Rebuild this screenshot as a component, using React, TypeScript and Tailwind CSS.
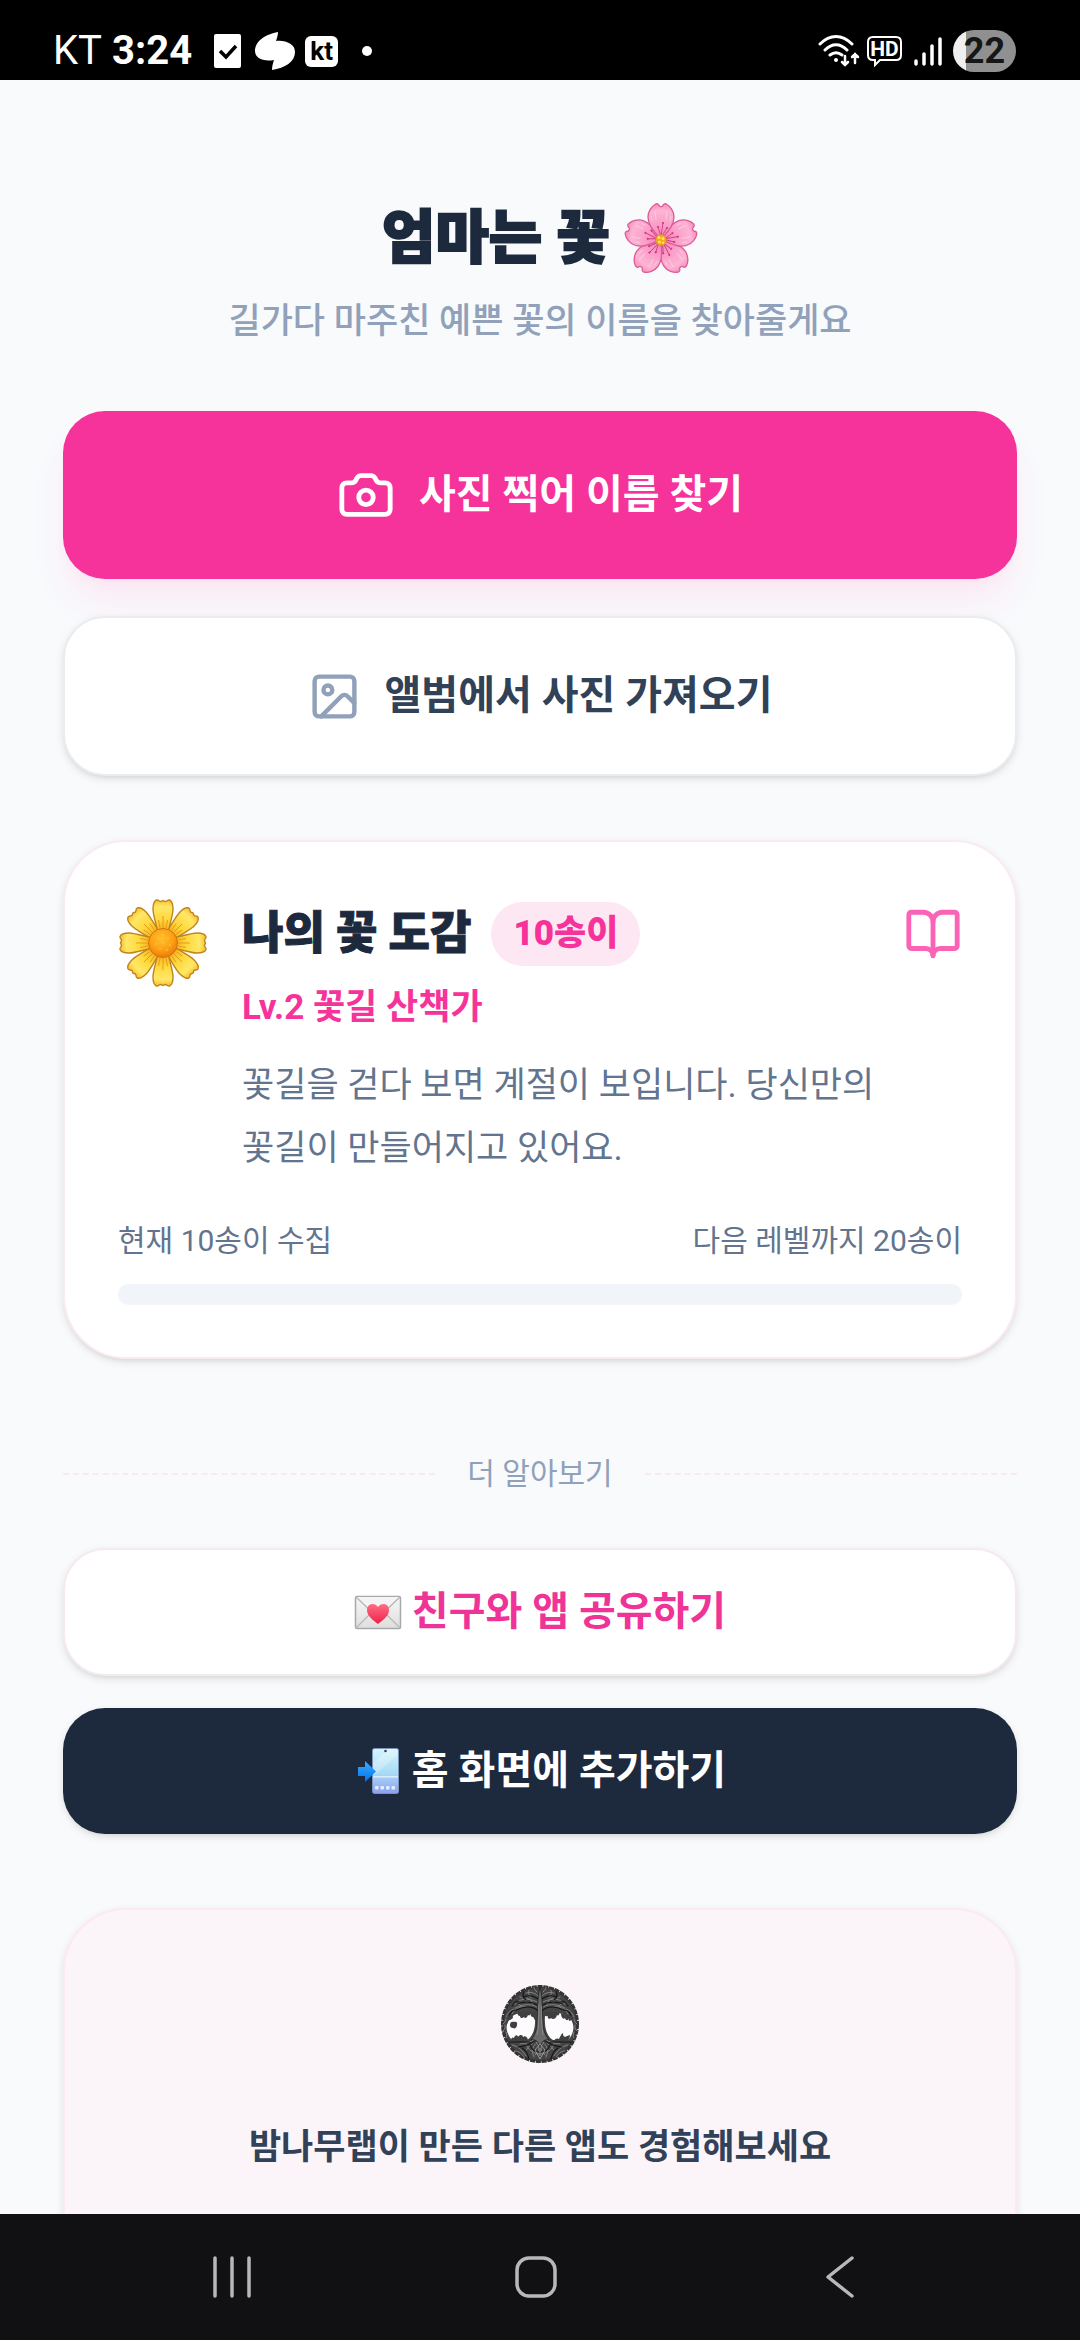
import type { ReactNode } from 'react';
import { BookOpen, Camera, Image as ImageIcon } from 'lucide-react';

function CherryBlossom() {
  return (
    <svg viewBox="-37 -38 74 72" className="h-[72px] w-[74px]" role="img" aria-label="벚꽃">
      <defs>
        <radialGradient id="blossom" gradientUnits="userSpaceOnUse" cx="0" cy="0" r="37">
          <stop offset="0" stopColor="#f47fb4" />
          <stop offset="0.45" stopColor="#fb9fc9" />
          <stop offset="0.8" stopColor="#fdb4d5" />
          <stop offset="1" stopColor="#f68abb" />
        </radialGradient>
      </defs>
      {[144, 216, 72, 288, 0].map((a) => (
        <g key={a} transform={`rotate(${a})`}>
          <path
            d="M0 0C-4 -6 -13 -13 -13 -23C-13 -29 -9 -34 -6 -35.500C-4 -37 -2.500 -36 -2 -34.500C-1.500 -33 1.500 -33 2 -34.500C2.500 -36 4 -37 6 -35.500C9 -34 13 -29 13 -23C13 -13 4 -6 0 0Z"
            fill="url(#blossom)"
            stroke="#dc5c97"
            strokeWidth="1.3"
            strokeLinejoin="round"
          />
          <path d="M-5 -20L-6 -29M5 -20L6 -29M-9 -19L-10 -24M9 -19L10 -24" stroke="#fdd3e6" strokeWidth="1" opacity="0.8" />
        </g>
      ))}
      {[0, 72, 144, 216, 288].map((a) => (
        <g key={a} transform={`rotate(${a})`} stroke="#d03c80" strokeWidth="0.9" fill="#c22d70">
          <path d="M0 -4L2 -17M0 -4L-3 -13M1 -4L6 -12" />
          <circle cx="2" cy="-17" r="0.7" />
          <circle cx="-3" cy="-13" r="0.7" />
          <circle cx="6" cy="-12" r="0.7" />
        </g>
      ))}
      <circle r="5.500" fill="#f3a81f" stroke="#d9812a" strokeWidth="0.6" />
      <g fill="#ffe45c">
        <circle cx="-2" cy="-2.500" r="1.500" />
        <circle cx="2" cy="-1.500" r="1.500" />
        <circle cx="-1.500" cy="2" r="1.500" />
        <circle cx="2.200" cy="2.800" r="1.200" />
      </g>
    </svg>
  );
}

function YellowFlower() {
  return (
    <svg viewBox="-45 -45 90 90" className="h-[90px] w-[90px] shrink-0" role="img" aria-label="꽃">
      <defs>
        <radialGradient id="petal" gradientUnits="userSpaceOnUse" cx="0" cy="0" r="43">
          <stop offset="0.3" stopColor="#f9b01c" />
          <stop offset="0.55" stopColor="#ffd83a" />
          <stop offset="0.85" stopColor="#ffe868" />
          <stop offset="1" stopColor="#f7c12c" />
        </radialGradient>
        <radialGradient id="disc" cx="0.45" cy="0.35" r="0.65">
          <stop offset="0" stopColor="#ffc02e" />
          <stop offset="0.6" stopColor="#fda013" />
          <stop offset="1" stopColor="#ec7a0a" />
        </radialGradient>
      </defs>
      {[45, 135, 225, 315, 0, 90, 180, 270].map((a) => (
        <g key={a} transform={`rotate(${a})`}>
          <path
            d="M-5 -10C-7 -20 -10 -28 -10 -34C-10 -38 -9 -42 -6.500 -43C-4.500 -43.500 -4 -41.500 -2.500 -41.500C-1 -41.500 -1 -42.500 0 -42.500C1 -42.500 1 -41.500 2.500 -41.500C4 -41.500 4.500 -43.500 6.500 -43C9 -42 10 -38 10 -34C10 -28 7 -20 5 -10Z"
            fill="url(#petal)"
            stroke="#c08420"
            strokeWidth="1.4"
            strokeLinejoin="round"
          />
          <path d="M0 -15V-27M-3 -15L-4.500 -23M3 -15L4.500 -23" stroke="#df9720" strokeWidth="0.9" />
        </g>
      ))}
      <circle r="14.500" fill="url(#disc)" stroke="#cf7411" strokeWidth="1" />
      <g fill="#ffd15c" opacity="0.55">
        <circle cx="-5" cy="-5" r="1" />
        <circle cx="0" cy="-8" r="1" />
        <circle cx="5" cy="-5" r="1" />
        <circle cx="-7" cy="1" r="1" />
        <circle cx="0" cy="0" r="1" />
        <circle cx="7" cy="2" r="1" />
        <circle cx="-3" cy="6" r="1" />
        <circle cx="4" cy="7" r="1" />
      </g>
    </svg>
  );
}

function LoveLetter() {
  return (
    <svg viewBox="0 0 48 48" className="h-12 w-12" role="img" aria-label="편지">
      <defs>
        <linearGradient id="paper" x1="0" y1="0" x2="0" y2="1">
          <stop offset="0" stopColor="#f7f7f7" />
          <stop offset="1" stopColor="#dedede" />
        </linearGradient>
        <linearGradient id="heart" x1="0" y1="0" x2="0" y2="1">
          <stop offset="0" stopColor="#ff6f86" />
          <stop offset="1" stopColor="#ee2048" />
        </linearGradient>
      </defs>
      <rect x="1.500" y="8.500" width="45" height="32" rx="1.500" fill="url(#paper)" stroke="#a9a9a9" strokeWidth="1.500" />
      <path d="M2 40L19 23M46 40L29 23" stroke="#b9b9b9" strokeWidth="1.200" />
      <path d="M2 9L21 27C23 29 25 29 27 27L46 9" fill="#f4f4f4" stroke="#b4b4b4" strokeWidth="1.200" />
      <path d="M24 36C19 32 13 28 13 22C13 15 21 14 24 19C27 14 35 15 35 22C35 28 29 32 24 36Z" fill="url(#heart)" />
    </svg>
  );
}

function PhoneArrow() {
  return (
    <svg viewBox="0 0 48 48" className="h-12 w-12" role="img" aria-label="휴대폰">
      <defs>
        <linearGradient id="phone" x1="0" y1="0" x2="0" y2="1">
          <stop offset="0" stopColor="#d5f4fb" />
          <stop offset="0.55" stopColor="#a9dbf6" />
          <stop offset="1" stopColor="#8f9df0" />
        </linearGradient>
        <linearGradient id="arrow" x1="0" y1="0" x2="0" y2="1">
          <stop offset="0" stopColor="#38adff" />
          <stop offset="1" stopColor="#0072f0" />
        </linearGradient>
      </defs>
      <rect x="18.500" y="1.500" width="26" height="45" rx="2" fill="url(#phone)" stroke="#7d93b8" strokeWidth="1" />
      <path d="M19 16L34 2H43.500V8L19 29Z" fill="#ffffff" opacity="0.25" />
      <rect x="19" y="29" width="25" height="1.500" fill="#d9edff" />
      <circle cx="31.500" cy="4" r="1.300" fill="#33415c" />
      <g fill="#dff0ff">
        <rect x="21" y="39" width="3.500" height="3.500" rx="1" />
        <rect x="26.500" y="39" width="3.500" height="3.500" rx="1" />
        <rect x="32" y="39" width="3.500" height="3.500" rx="1" />
        <rect x="37.500" y="39" width="3.500" height="3.500" rx="1" />
      </g>
      <path d="M4 20H11V14L22 24.500L11 35V29H4Z" fill="url(#arrow)" />
    </svg>
  );
}

function HalfTree() {
  return (
    <g>
      <path
        d="M35 32C31 29 27 30 24 29C18 29 12 31 9 35C7 39 6 43 7 47C8 51 10 54 12 56H27C32 53 36 46 35 32Z"
        fill="#fdfbfd"
      />
      <g fill="none" stroke="#8b8b8b" strokeWidth="0.9" strokeLinecap="round">
        <path d="M38 24C34 20 25 19 15 24M37 18C31 15 25 14 18 17M38 12C34 8 30 8 26 9M12 30C14 25 20 22 26 23M6 33C8 28 11 26 14 25" />
        <path d="M27 18C25 15 22 13 20 13M31 14C29 12 28 9 29 6M22 22C19 20 16 19 13 20M33 20C32 17 30 15 27 14M37 8C35 6 34 5 34 3" />
        <path d="M3 40C5 38 6 37 6 35M3 47C5 45 6 43 5 41M6 54C7 52 7 50 6 48" />
        <path d="M38 53C36 58 30 60 26 66M37 55C33 56 27 60 20 60M38 58C32 62 31 67 34 73M36 58C40 62 40 68 35 71M26 60C28 66 33 69 39 70M12 61C18 62 22 66 26 72M15 67C19 67 22 70 24 73" />
      </g>
      <g fill="none" stroke="#141414" strokeWidth="1.1" strokeLinecap="round">
        <path d="M38 27C33 22 25 22 16 26M37 21C31 17 25 17 17 20M38 15C33 11 28 11 23 13M9 32C10 28 13 26 17 26M24 8C22 11 23 14 26 16M12 22C14 18 17 17 19 17" />
        <path d="M37 56C31 59 26 63 18 63M9 58H30M30 61C32 66 36 68 39 68M22 64C25 66 28 70 29 75" />
      </g>
    </g>
  );
}

function TreeLogo() {
  return (
    <svg viewBox="0 0 80 80" className="h-[80px] w-[80px]" role="img" aria-label="밤나무랩">
      <circle cx="40" cy="40" r="37.500" fill="#444444" stroke="#333333" strokeWidth="3" strokeDasharray="5 0.800" />
      <HalfTree />
      <g transform="translate(80 0) scale(-1 1)">
        <HalfTree />
      </g>
      <path
        d="M40 3C37 15 38 25 37 38C37 46 35 51 31 56C36 55 38 58 40 62C42 58 44 55 49 56C45 51 43 46 43 38C42 25 43 15 40 3Z"
        fill="#6a6a6a"
        stroke="#1f1f1f"
        strokeWidth="0.8"
      />
      <path d="M39 20C38.500 32 39 44 37 51M41.500 22C41 34 42 44 43 51" fill="none" stroke="#969696" strokeWidth="0.7" />
      <g fill="#3f3f3f">
        <path d="M10 41C10 38 12 37 14 38C16 37 18 39 17 41C17 44 14 45 13 44C11 44 10 43 10 41Z" />
        <path d="M18 28H31C31 31 29 32 28 31C27 34 25 35 24 33C22 35 20 34 20 32C18 32 17 30 18 28Z" />
        <path d="M31 29L36 28V37C34 36 34 33 33 33C31 33 30 31 31 29Z" />
        <path d="M44 28H59C60 31 58 32 57 31C56 35 53 36 51 34C49 36 47 34 48 32C46 33 44 32 44 28Z" />
        <path d="M61 29L71 32C72 35 70 36 69 34C68 37 66 37 65 34C63 36 61 33 61 29Z" />
        <path d="M11 57C11 53 13 53 14 54C15 50 18 51 18 53C20 50 23 51 23 53C26 51 28 54 28 57Z" />
        <path d="M54 57C55 54 58 54 59 55C60 53 61 50 63 49C63 51 63 52 65 53C67 52 69 51 70 51C70 54 68 57 67 57Z" />
        <path d="M6 42L9 36C10 37 11 35 13 34C12 32 14 31 15 29L8 32ZM74 42L72 36L69 37L68 32L73 33Z" />
      </g>
      <path d="M40 60L45 66L40 75L35 66ZM40 64V72" fill="none" stroke="#9a9a9a" strokeWidth="1" />
    </svg>
  );
}

function StatusBar() {
  return (
    <header className="flex h-20 shrink-0 items-end justify-between bg-black pr-16 pb-2 pl-[53px] text-white">
      <div className="flex h-[42px] items-center">
        <span className="text-[40px] leading-[42px] font-normal">KT</span>
        <span className="ml-2.5 text-[40px] leading-[42px] font-bold">3:24</span>
        <svg viewBox="0 0 27 34" className="ml-[22px] h-[34px] w-[27px]" aria-hidden="true">
          <rect width="27" height="34" rx="2" fill="#fff" />
          <path d="M6 17L12 23L22 12" fill="none" stroke="#000" strokeWidth="3.500" />
        </svg>
        <svg viewBox="0 0 40 38" className="ml-3.5 h-[38px] w-10" aria-hidden="true">
          <path
            d="M23 0C23 3 22 6 21 9C31 8 40 12 40 20C40 30 30 36 17 38C17 34 18 31 19 28C8 30 0 26 0 19C0 9 11 2 23 0Z"
            fill="#fff"
          />
        </svg>
        <span className="ml-2.5 flex h-[31px] w-[33px] items-center justify-center rounded-md bg-white text-[26px] leading-[28px] font-bold text-black">
          kt
        </span>
        <span className="ml-6 h-2.5 w-2.5 rounded-full bg-white" />
      </div>
      <div className="flex h-[42px] items-center">
        <svg viewBox="0 0 42 32" className="h-8 w-[42px]" fill="none" stroke="#fff" strokeWidth="3" strokeLinecap="round" aria-hidden="true">
          <path d="M2 9C12 -1 24 -1 34 9M7 15C14 8 22 8 29 15M12 20C16 17 20 17 24 20" />
          <circle cx="18" cy="25" r="2" fill="#fff" stroke="none" />
          <path d="M27 21V30M24 27L27 30L30 27M37 28V19M34 22L37 19L40 22" strokeWidth="2.500" />
        </svg>
        <svg viewBox="0 0 37 32" className="ml-1.5 h-8 w-[37px]" aria-hidden="true">
          <path d="M7 2H30Q35 2 35 7V20Q35 25 30 25H14L9 30V25H7Q2 25 2 20V7Q2 2 7 2Z" fill="none" stroke="#fff" strokeWidth="2" />
          <text x="18.500" y="21" textAnchor="middle" fill="#fff" fontSize="21" fontWeight="700">
            HD
          </text>
        </svg>
        <svg viewBox="0 0 28 32" className="ml-[11px] h-8 w-7" stroke="#fff" strokeWidth="3.500" strokeLinecap="round" aria-hidden="true">
          <path d="M2 26V29M10 19V29M18 11V29M26 4V29" />
        </svg>
        <span className="ml-[11px] flex h-[42px] w-[63px] items-center justify-center rounded-full bg-linear-to-r from-[#efefef] from-21% to-[#909090] to-21% text-[36px] leading-[42px] font-bold text-[#161616]">
          22
        </span>
      </div>
    </header>
  );
}

function NavBar() {
  return (
    <nav className="grid h-[126px] shrink-0 grid-cols-3 items-center bg-[#111113] pr-[88px] pl-20 text-[#b8b8ba]">
      <button type="button" aria-label="최근 앱" className="justify-self-center">
        <svg viewBox="0 0 44 44" className="h-11 w-11" fill="none" stroke="currentColor" strokeWidth="3.500" strokeLinecap="round">
          <path d="M5 3V41M22 3V41M39 3V41" />
        </svg>
      </button>
      <button type="button" aria-label="홈" className="justify-self-center">
        <svg viewBox="0 0 44 44" className="h-11 w-11" fill="none" stroke="currentColor" strokeWidth="3.500">
          <rect x="3" y="3" width="38" height="38" rx="12" />
        </svg>
      </button>
      <button type="button" aria-label="뒤로" className="justify-self-center">
        <svg viewBox="0 0 44 44" className="h-11 w-11" fill="none" stroke="currentColor" strokeWidth="3.500" strokeLinecap="round" strokeLinejoin="round">
          <path d="M34 3L10 22L34 41" />
        </svg>
      </button>
    </nav>
  );
}

function EmojiButton({ icon, tone, children }: { icon: ReactNode; tone: string; children: ReactNode }) {
  return (
    <button
      type="button"
      className={`flex w-full items-center justify-center gap-2.5 rounded-[42px] text-[40px] leading-[60px] font-bold ${tone}`}
    >
      {icon}
      <span>{children}</span>
    </button>
  );
}

export default function App() {
  return (
    <div className="flex h-screen flex-col bg-[#f8fafc] font-[Roboto,'Noto_Sans_CJK_KR',sans-serif]">
      <StatusBar />
      <main className="min-h-0 flex-1 overflow-y-auto px-[63px] pt-[116px] [scrollbar-width:none]">
        <div className="text-center">
          <h1 className="flex items-center justify-center gap-3.5 text-[58px] leading-[84px] font-black text-[#1d293d] [-webkit-text-stroke:2px_#1d293d]">
            <span>엄마는 꽃</span>
            <CherryBlossom />
          </h1>
          <p className="mt-4 text-[35px] leading-[52px] font-medium text-[#90a1b9]">
            길가다 마주친 예쁜 꽃의 이름을 찾아줄게요
          </p>
        </div>

        <div className="mt-[63px] flex flex-col gap-[37px]">
          <button
            type="button"
            className="flex w-full items-center justify-center gap-6 rounded-[42px] bg-[#f6339a] py-[54px] text-[40px] leading-[60px] font-bold text-white shadow-[0_26px_40px_-8px_#fce7f3,0_10px_16px_-10px_#fccee8]"
          >
            <Camera className="h-[58px] w-[58px]" strokeWidth={2} aria-hidden="true" />
            <span>사진 찍어 이름 찾기</span>
          </button>
          <button
            type="button"
            className="flex w-full items-center justify-center gap-6 rounded-[42px] border-2 border-[#ebecef] bg-white py-12 text-[40px] leading-[60px] font-bold text-[#314158] shadow-[0_3px_8px_rgba(0,0,0,0.1),0_3px_5px_-3px_rgba(0,0,0,0.1)]"
          >
            <ImageIcon className="h-[53px] w-[53px] text-[#90a1b9]" strokeWidth={2} aria-hidden="true" />
            <span>앨범에서 사진 가져오기</span>
          </button>
        </div>

        <section className="mt-16 rounded-[63px] border-2 border-[#fbeaf2] bg-white px-[53px] pt-14 pb-[52px] shadow-[0_3px_8px_rgba(0,0,0,0.1),0_3px_5px_-3px_rgba(0,0,0,0.1)]">
          <div className="flex items-start gap-[34px]">
            <YellowFlower />
            <div className="min-w-0 flex-1 pt-1">
              <div className="flex items-center gap-5">
                <h2 className="text-[45px] leading-[64px] font-black text-[#1d293d] [-webkit-text-stroke:1px_#1d293d]">나의 꽃 도감</h2>
                <span className="rounded-full bg-[#fce7f3] px-[22px] text-[35px] leading-[64px] font-black text-[#f6339a]">
                  10송이
                </span>
                <BookOpen className="ml-auto h-[58px] w-[58px] text-[#fb64b6]" strokeWidth={2} aria-hidden="true" />
              </div>
              <p className="mt-4 text-[35px] leading-[52px] font-bold text-[#f6339a]">Lv.2 꽃길 산책가</p>
              <p className="mt-5 text-[35px] leading-[63px] break-keep text-[#62748e]">
                꽃길을 걷다 보면 계절이 보입니다. 당신만의 꽃길이 만들어지고 있어요.
              </p>
            </div>
          </div>
          <div className="mt-10 flex justify-between text-[30px] leading-[42px] text-[#62748e]">
            <span>현재 10송이 수집</span>
            <span>다음 레벨까지 20송이</span>
          </div>
          <div
            role="progressbar"
            aria-label="다음 레벨 진행률"
            aria-valuenow={0}
            aria-valuemin={0}
            aria-valuemax={100}
            className="mt-[22px] h-[21px] rounded-full bg-[#f1f5f9]"
          />
        </section>

        <div className="mt-[94px] flex items-center gap-8 text-[30px] leading-[42px] text-[#90a1b9]">
          <span className="flex-1 border-t-2 border-dashed border-[#fce7f3]" />
          <span>더 알아보기</span>
          <span className="flex-1 border-t-2 border-dashed border-[#fce7f3]" />
        </div>

        <div className="mt-[53px] flex flex-col gap-8">
          <EmojiButton
            icon={<LoveLetter />}
            tone="border-2 border-[#f5eaf0] bg-white py-8 text-[#ee3497] shadow-[0_3px_8px_rgba(0,0,0,0.1),0_3px_5px_-3px_rgba(0,0,0,0.1)]"
          >
            친구와 앱 공유하기
          </EmojiButton>
          <EmojiButton
            icon={<PhoneArrow />}
            tone="bg-[#1d293d] py-[33px] text-white shadow-[0_3px_8px_rgba(0,0,0,0.1),0_3px_5px_-3px_rgba(0,0,0,0.1)]"
          >
            홈 화면에 추가하기
          </EmojiButton>
        </div>

        <section className="mt-[74px] flex flex-col items-center rounded-[63px] border-2 border-[#fce9f2] bg-[#fbf4f9] px-[53px] pt-[74px] pb-[120px] shadow-[0_3px_8px_rgba(0,0,0,0.1)]">
          <TreeLogo />
          <p className="mt-[58px] text-[35px] leading-[52px] font-bold text-[#314158]">
            밤나무랩이 만든 다른 앱도 경험해보세요
          </p>
        </section>
      </main>
      <NavBar />
    </div>
  );
}
